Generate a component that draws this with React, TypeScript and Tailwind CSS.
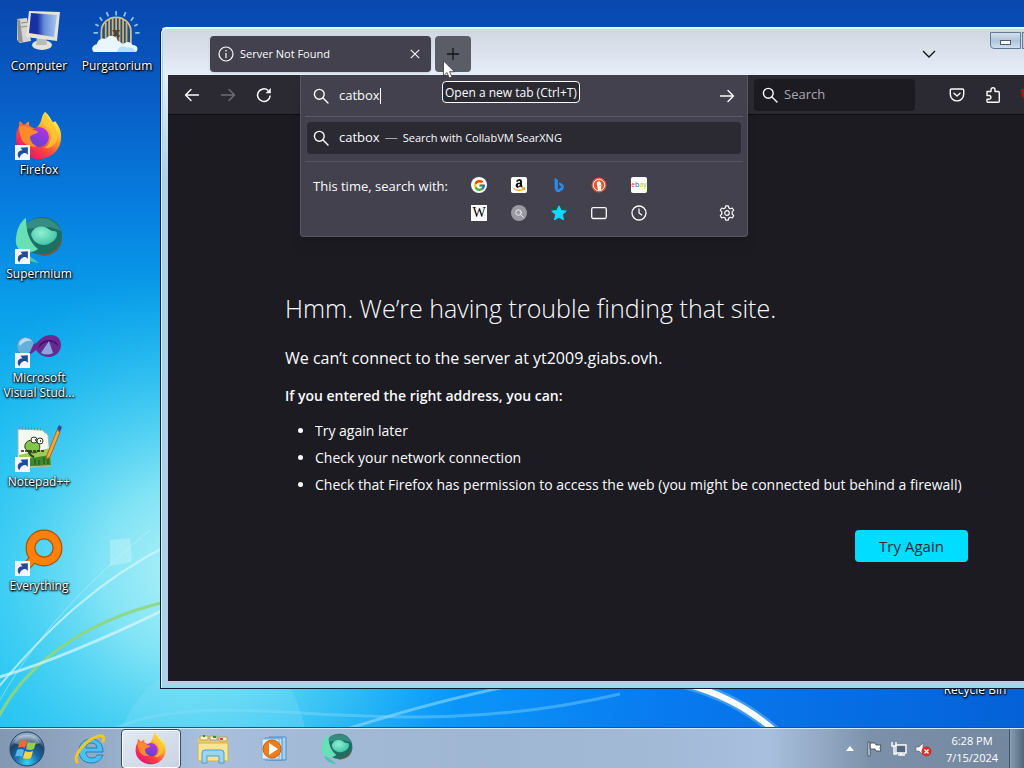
import React from 'react'
import { FcGoogle } from 'react-icons/fc'
import { BsBing } from 'react-icons/bs'

type IconProps = { className?: string }

function Wallpaper() {
  return (
    <svg className="absolute inset-0 w-full h-full" viewBox="0 0 1024 768" preserveAspectRatio="none" aria-hidden="true">
      <defs>
        <linearGradient id="sky" x1="0" y1="0" x2="0" y2="1">
          <stop offset="0" stopColor="#0847ae" />
          <stop offset="0.14" stopColor="#0860c8" />
          <stop offset="0.27" stopColor="#067fe0" />
          <stop offset="0.4" stopColor="#0a9fea" />
          <stop offset="0.54" stopColor="#12b6ef" />
          <stop offset="0.75" stopColor="#20c6f3" />
          <stop offset="1" stopColor="#1cc0f2" />
        </linearGradient>
        <radialGradient id="glow" gradientUnits="userSpaceOnUse" cx="190" cy="570" r="300">
          <stop offset="0" stopColor="#b4f2f8" />
          <stop offset="0.3" stopColor="#92e9f6" stopOpacity="0.85" />
          <stop offset="1" stopColor="#2cc4f2" stopOpacity="0" />
        </radialGradient>
        <linearGradient id="deep" x1="0" y1="0" x2="1" y2="0">
          <stop offset="0.2" stopColor="#18a8f6" stopOpacity="0" />
          <stop offset="0.42" stopColor="#0a96fa" stopOpacity="0.95" />
          <stop offset="0.65" stopColor="#087af0" />
          <stop offset="1" stopColor="#0561d8" />
        </linearGradient>
      </defs>
      <rect width="1024" height="768" fill="url(#sky)" />
      <rect y="600" width="1024" height="168" fill="url(#deep)" />
      <rect width="1024" height="768" fill="url(#glow)" />
      <path d="M122 728c20-50 60-70 110-70s65 35 73 70z" fill="#8ae4f8" opacity="0.25" />
      <g fill="none">
        <path d="M-4 722C22 668 80 622 165 602" stroke="#8fd67c" strokeWidth="3" opacity="0.9" />
        <path d="M-4 678Q60 660 168 608" stroke="#d8f8fc" strokeWidth="3" opacity="0.7" />
        <path d="M-4 690C50 625 100 580 168 545" stroke="#d8f8fc" strokeWidth="2" opacity="0.7" />
        <path d="M0 700C40 630 90 580 150 530" stroke="#c8f5fb" strokeWidth="1" opacity="0.5" />
        <path d="M116 728C230 680 380 750 620 694" stroke="#8adcfb" strokeWidth="3" opacity="0.4" />
        <path d="M350 728Q440 700 510 686" stroke="#8edcfb" strokeWidth="3" opacity="0.6" />
        <path d="M686 684Q738 698 776 732" stroke="#8fd2ff" strokeWidth="11" opacity="0.4" />
        <path d="M686 684Q738 698 776 732" stroke="#fff" strokeWidth="6" />
      </g>
      <path d="m110 540 20-2 2 24-22 4z" fill="#cdf8fc" opacity="0.4" />
    </svg>
  )
}

function FirefoxLogo({ className }: IconProps) {
  return (
    <svg viewBox="0 0 48 48" className={className} aria-hidden="true">
      <defs>
        <linearGradient id="foxBody" x1="0.85" y1="0.1" x2="0.2" y2="0.95">
          <stop offset="0.05" stopColor="#fff44f" />
          <stop offset="0.35" stopColor="#ff9f24" />
          <stop offset="0.62" stopColor="#ff4a40" />
          <stop offset="0.95" stopColor="#ef1568" />
        </linearGradient>
        <linearGradient id="foxCore" x1="0.7" y1="0" x2="0.3" y2="1">
          <stop offset="0" stopColor="#b833e1" />
          <stop offset="1" stopColor="#5b44d0" />
        </linearGradient>
      </defs>
      <path d="M30 0c4 3 5 6 7 9 1 2 2 1 3 0 4 5 7 11 6 18-1 12-11 20-22 20S2 39 1 28c-.5-6 1-10 3-14 0-2 0-4 1-5l4 4c3-2 4-4 5-3-.4 2 0 4 2 5l5 2c1-2 4-5 5-8 1-3 1-6 4-9z" fill="url(#foxBody)" />
      <circle cx="24" cy="25" r="10" fill="url(#foxCore)" />
      <path d="M4 14c6-1 11 1 14 4 3 0 4 1 5 2-3 3-7 2-8 5 0 4 3 8 7 9-6 2-12-1-15-6-2-4-3-9-3-14z" fill="#ff8a2c" />
      <path d="M29 13c5 2 8 7 7 13-1 5-3 8-7 10 6 1 11-3 13-8 2-7-1-12-5-17-3-4-5-7-7-11-2 4-3 9-1 13z" fill="#ffc634" opacity="0.8" />
    </svg>
  )
}

function SupermiumLogo({ className }: IconProps) {
  return (
    <svg viewBox="0 0 48 48" className={className} aria-hidden="true">
      <defs>
        <radialGradient id="superCore" cx="0.4" cy="0.35" r="0.7">
          <stop offset="0" stopColor="#8cf0d4" />
          <stop offset="1" stopColor="#3fc0a2" />
        </radialGradient>
      </defs>
      <ellipse cx="27" cy="20" rx="20" ry="19" fill="#1d6f66" />
      <path d="M8 13C15-2 39-2 46 15c-8-4-14-5-20-3z" fill="#348d80" />
      <path d="M26 38c12 0 20-8 21-18 1 12-8 20-20 20z" fill="#6a5b3c" />
      <path d="M1 22C2 12 6 5 11 2c0 13 3 24 12 31-5 4-12 4-17 2-4-3-6-8-5-13z" fill="#68dfb5" />
      <path d="M16 18c2-6 8-9 14-7 3 1 4 3 7 4 3 0 5 0 5 3 0 6-7 11-14 11-7-1-11-5-12-11z" fill="url(#superCore)" />
      <path d="M6 35c6 2 12 8 18 12-9-1-14-4-19-10z" fill="#45c8b4" />
    </svg>
  )
}

function ComputerIcon({ className }: IconProps) {
  return (
    <svg viewBox="0 0 48 48" className={className} aria-hidden="true">
      <defs>
        <linearGradient id="screen" x1="0" y1="0" x2="1" y2="0">
          <stop offset="0.3" stopColor="#1631a4" />
          <stop offset="0.55" stopColor="#688dd8" />
          <stop offset="1" stopColor="#a6c5ef" />
        </linearGradient>
      </defs>
      <path d="m2 11 10-1 4 23-11 2-3-3z" fill="#d9d5cb" />
      <path d="m2 11 3 1 3 23-5-2z" fill="#8d9297" />
      <path d="m6 15 8-1M6 19l8-1" stroke="#8a8a88" />
      <ellipse cx="27" cy="37" rx="10" ry="5" fill="#e3e3de" />
      <path d="m22 28 9 2 1 7H21z" fill="#b9bbb9" />
      <path d="m14 3 31 1-3 29-31-4z" fill="#e5e3da" />
      <path d="m16 5 26 2-3 22-25-4z" fill="url(#screen)" />
    </svg>
  )
}

function GatesIcon({ className }: IconProps) {
  return (
    <svg viewBox="0 0 60 48" className={className} aria-hidden="true">
      <g stroke="#8ac5f4" strokeWidth="2">
        <path d="M29 0v5M18 1l2 5M40 1l-2 5M10 7l3 4M49 7l-3 4M5 15l4 2M54 15l-4 2M3 25h5M56 25h-5" />
      </g>
      <path d="M12 38V23a17 16 0 0 1 34 0v15z" fill="#244f86" stroke="#d4c28a" strokeWidth="2" />
      <path d="M17 13v25M21 9v29M25 8v30M29 7v31M33 8v30M37 9v29M41 13v25" stroke="#d2b56a" strokeWidth="2" />
      <path d="M25 23a3 3 0 1 1 0 5M33 23a3 3 0 1 0 0 5" fill="none" stroke="#584324" strokeWidth="2" />
      <path d="M3 47c-4-4 0-9 4-9 0-5 6-8 10-6 4-6 12-4 14 2 4 2 5 3 6 5 3-5 9-4 11 0 6 0 7 5 4 8z" fill="#e8f6ff" />
      <path d="M30 47c1-6 7-8 11-5 6-1 9 1 11 5z" fill="#b8dcfa" />
    </svg>
  )
}

function VisualStudioIcon({ className }: IconProps) {
  return (
    <svg viewBox="0 0 48 48" className={className} aria-hidden="true">
      <path d="M2 26c0-8 9-12 15-6l3 4c5-4 8-9 16-9 6 0 10 4 10 10 0 7-6 12-12 12-6 0-10-3-13-7-5 4-8 6-12 6-4-1-7-5-7-10z" fill="#6a2894" />
      <path d="M2 26c0-8 9-12 15-6l2 3-4 9c-7 5-13 1-13-6z" fill="#63b0dd" />
      <path d="M4 24c1-6 8-8 13-3-5-1-9 1-12 5z" fill="#b6dff0" />
      <path d="M23 29c1-6 6-9 11-9s9 3 9 7c-2-4-6-6-10-5-4 0-7 3-10 7z" fill="#401366" />
      <path d="m26 33 8-12 4 12q-6 3-12 0z" fill="#8aa5dd" />
    </svg>
  )
}

function NotepadIcon({ className }: IconProps) {
  return (
    <svg viewBox="0 0 48 48" className={className} aria-hidden="true">
      <path d="m3 5 24 1 6 5 3 31-33 2z" fill="#f5f8ee" stroke="#a5b5aa" />
      <path d="m4 4 24 1" stroke="#7e8b8c" strokeWidth="3" strokeDasharray="1 2" />
      <path d="m4 31 31-7 1 18-32 1z" fill="#9dce52" />
      <path d="m4 36 31-5 1 10-32 2z" fill="#3f8a2d" />
      <path d="M20 41v-6M24 41v-5M29 40v-7M33 40v-5" stroke="#1f4f1c" />
      <path d="M10 24c-1-6 4-9 9-7 5 1 7 5 5 9-3 5-11 3-14-2z" fill="#83c54a" stroke="#263f1c" />
      <path d="M13 26c1 4 3 6 6 7" fill="none" stroke="#263f1c" strokeWidth="2" />
      <circle cx="19" cy="16" r="3" fill="#fff" stroke="#263c20" />
      <circle cx="25" cy="17" r="3" fill="#fff" stroke="#263c20" />
      <path d="M20 16h1M25 17h1M6 27h24" stroke="#222" strokeDasharray="3 1" strokeWidth="1.500" />
      <path d="m32 31 10-25 3 2-10 25-4 2z" fill="#f1aa3b" stroke="#a96a22" />
      <path d="m42 5 2-4 3 2-2 5z" fill="#374c91" />
    </svg>
  )
}

function EverythingIcon({ className }: IconProps) {
  return (
    <svg viewBox="0 0 48 48" className={className} aria-hidden="true">
      <path d="m7 43 12-13" stroke="#ac5207" strokeWidth="9" strokeLinecap="round" />
      <circle cx="29" cy="20" r="13.500" fill="none" stroke="#ac5207" strokeWidth="10" />
      <circle cx="29" cy="20" r="13.500" fill="none" stroke="#ff8109" strokeWidth="7.500" />
      <path d="m8 42 12-13" stroke="#ff8109" strokeWidth="7" />
    </svg>
  )
}

function ShortcutArrow() {
  return (
    <svg viewBox="0 0 14 14" className="absolute left-0 bottom-0 w-[15px] h-[15px]" aria-hidden="true">
      <rect width="14" height="14" fill="#f4f8fc" />
      <path d="M4 12.500C1 9 3 5 7 5L5 2.500l7-.5v7L10 7.500C7 7 5 9 4 12.500z" fill="#1d4d95" />
    </svg>
  )
}

type DesktopItem = { label: string; icon: (p: IconProps) => React.ReactElement; shortcut?: boolean; wide?: boolean }

const columns: DesktopItem[][] = [
  [
    { label: 'Computer', icon: ComputerIcon },
    { label: 'Firefox', icon: FirefoxLogo, shortcut: true },
    { label: 'Supermium', icon: SupermiumLogo, shortcut: true },
    { label: 'Microsoft Visual Stud...', icon: VisualStudioIcon, shortcut: true },
    { label: 'Notepad++', icon: NotepadIcon, shortcut: true },
    { label: 'Everything', icon: EverythingIcon, shortcut: true },
  ],
  [{ label: 'Purgatorium', icon: GatesIcon, wide: true }],
]

const labelStyle = 'text-xs leading-[15px] text-white text-center [text-shadow:1px_1px_2px_#000,0_1px_2px_#000,0_0_2px_#000]'

function DesktopIcons() {
  return (
    <div className="relative flex">
      {columns.map((items, i) => (
        <div key={i} className="flex flex-col">
          {items.map(({ label, icon: Icon, shortcut, wide }) => (
            <button key={label} className="w-[78px] h-[104px] pt-2 flex flex-col items-center gap-[2px]">
              <span className="relative">
                <Icon className={wide ? 'w-[52px] h-[48px]' : 'w-[48px] h-[48px]'} />
                {shortcut && <ShortcutArrow />}
              </span>
              <span className={labelStyle}>{label}</span>
            </button>
          ))}
        </div>
      ))}
    </div>
  )
}

function SearchGlyph({ className }: IconProps) {
  return (
    <svg viewBox="0 0 16 16" className={className} fill="none" stroke="currentColor" strokeWidth="1.4" strokeLinecap="round" aria-hidden="true">
      <circle cx="6.3" cy="6.3" r="4.9" />
      <path d="m10 10 5 5" />
    </svg>
  )
}

function ArrowGlyph({ className }: IconProps) {
  return (
    <svg viewBox="0 0 16 16" className={className} fill="none" stroke="currentColor" strokeWidth="1.4" strokeLinecap="round" strokeLinejoin="round" aria-hidden="true">
      <path d="M1.5 8h13M9 2.5 14.5 8 9 13.5" />
    </svg>
  )
}

function TabStrip() {
  return (
    <div className="h-[47px] flex items-start pl-[42px]">
      <div className="mt-2 w-[221px] h-9 rounded bg-[#42414d] text-[#fbfbfe] flex items-center pl-2 pr-2 shadow">
        <svg viewBox="0 0 16 16" className="w-4 h-4" fill="none" stroke="currentColor" strokeWidth="1.2" aria-hidden="true">
          <circle cx="8" cy="8" r="7" />
          <path d="M8 7v5M8 4v1.4" />
        </svg>
        <span className="ml-[6px] flex-1 text-[11px]">Server Not Found</span>
        <button aria-label="Close tab" className="w-4 h-4 flex items-center justify-center">
          <svg viewBox="0 0 10 10" className="w-[10px] h-[10px]" stroke="currentColor" strokeWidth="1.1"><path d="m.8.8 8.4 8.4M9.2.8.8 9.2" /></svg>
        </button>
      </div>
      <button aria-label="Open a new tab" className="mt-2 ml-1 w-9 h-9 rounded bg-[#5a5d66] text-[#15141a] flex items-center justify-center">
        <svg viewBox="0 0 16 16" className="w-4 h-4" stroke="currentColor" strokeWidth="1.3"><path d="M8 2v12M2 8h12" /></svg>
      </button>
      <button aria-label="List all tabs" className="mt-2 ml-auto w-9 h-9 text-[#15141a] flex items-center justify-center">
        <svg viewBox="0 0 14 8" className="w-[14px] h-2" fill="none" stroke="currentColor" strokeWidth="1.4"><path d="m1 1 6 6 6-6" /></svg>
      </button>
      <div className="ml-[43px] mt-[4px] h-[17px] flex gap-px text-[#4f5c6e]">
        <button aria-label="Minimize" className="w-[31px] border border-[#617a98] rounded-bl bg-linear-to-b from-[#d4dfea] via-[#afc4d8] to-[#cfdfef] flex items-end justify-center pb-[3px]">
          <span className="w-[11px] h-[5px] border border-[#4f5c6e] bg-white" />
        </button>
        <button aria-label="Maximize" className="w-[26px] border border-[#617a98] bg-[#bdcfdf]" />
        <button aria-label="Close" className="w-[47px] border border-[#617a98] bg-[#c9665a]" />
      </div>
    </div>
  )
}

const engineStyle = 'w-4 h-4'

function Engines() {
  const engines: [string, React.ReactElement][] = [
    ['Google', <span className="w-4 h-4 rounded-full bg-white flex items-center justify-center"><FcGoogle className="w-[13px] h-[13px]" /></span>],
    ['Amazon', <svg viewBox="0 0 16 16" className={engineStyle}>
      <rect width="16" height="16" rx="2" fill="#fff" />
      <path d="M5 4.500Q5.500 2 8.200 2q2.800 0 2.800 2.700V8q0 .8.700 1.400l-1.500 1.200q-.7-.5-.9-1.100-2 1.700-3.700.9Q4.200 9.500 4.700 7.700 5.300 5.600 9 5.600V4.700q0-1-.9-1t-1.100 1zM9 7Q6.800 7 6.800 8.300q.1.900.9.900 1.300-.2 1.300-2.200z" fill="#111" />
      <path d="M2.500 11.500q5.500 4 11 0M11 11h2.500v2" fill="none" stroke="#e8a520" strokeWidth="1.3" />
    </svg>],
    ['Bing', <BsBing className="w-[14px] h-[14px] text-[#2a8cf0]" />],
    ['DuckDuckGo', <svg viewBox="0 0 16 16" className={engineStyle}>
      <circle cx="8" cy="8" r="7.500" fill="#de5833" />
      <circle cx="8" cy="8" r="5.700" fill="none" stroke="#fff" strokeWidth="0.900" />
      <path d="M7 13 5.800 6.800C5 4.500 8 3.500 9.600 5.200l.8 3.500-.6 4.300z" fill="#fff" />
      <path d="m8.400 8 3 .4-2.800 1z" fill="#f7b733" />
    </svg>],
    ['eBay', <svg viewBox="0 0 16 16" className={engineStyle}>
      <rect width="16" height="16" rx="2" fill="#fff" />
      <text x="8" y="10" textAnchor="middle" fontSize="7" fill="#e53238">e<tspan fill="#0064d2">b</tspan><tspan fill="#f5af02">a</tspan><tspan fill="#86b817">y</tspan></text>
    </svg>],
    ['Wikipedia', <span className="w-4 h-4 bg-white text-black text-sm leading-4 text-center font-['Liberation_Serif',serif]">W</span>],
    ['CollabVM SearXNG', <span className="w-4 h-4 rounded-full bg-[#9a9aa0] text-white flex items-center justify-center"><SearchGlyph className="w-[9px] h-[9px]" /></span>],
    ['Bookmarks', <svg viewBox="0 0 16 16" className={engineStyle}><path d="m8 .8 2.2 4.7 5.1.6-3.8 3.5 1 5.2L8 12.3l-4.5 2.5 1-5.2L.7 6.1l5.1-.6z" fill="#00ddff" stroke="#00ddff" strokeLinejoin="round" /></svg>],
    ['Tabs', <svg viewBox="0 0 16 16" className={engineStyle}><rect x="0.7" y="2.7" width="14.6" height="10.8" rx="1.5" fill="none" stroke="currentColor" strokeWidth="1.3" /></svg>],
    ['History', <svg viewBox="0 0 16 16" className={engineStyle} fill="none" stroke="currentColor" strokeWidth="1.3"><circle cx="8" cy="8" r="7" /><path d="M8 3.5V8l3.2 2.2" /></svg>],
  ]

  return (
    <div className="flex px-3 pt-[9px] pb-[9px]">
      <p className="w-[146px] pt-[5px] text-[13px] leading-5">This time, search with:</p>
      <div className="grid grid-cols-5">
        {engines.map(([name, icon]) => (
          <button key={name} aria-label={name} className="w-10 h-7 flex items-center justify-center">{icon}</button>
        ))}
      </div>
      <button aria-label="Search settings" className="ml-auto mt-7 w-4 h-7 flex items-center justify-center">
        <svg viewBox="0 0 16 16" className="w-4 h-4" fill="none" stroke="currentColor" strokeWidth="1.2" strokeLinejoin="round">
          <path d="M6.7.8h2.6l.5 2.1 1.5.8 2-.7 1.4 2.2-1.5 1.6v2.2l1.5 1.7-1.4 2.3-2-.7-1.5.8-.5 2.1H6.7l-.5-2.1-1.5-.8-2 .7-1.4-2.3L2.8 9V6.8L1.3 5.2 2.7 3l2 .7 1.5-.8z" />
          <circle cx="8" cy="8" r="2.3" />
        </svg>
      </button>
    </div>
  )
}

function UrlBar() {
  return (
    <div className="relative w-[448px] shrink-0 self-stretch">
      <div className="absolute inset-x-0 top-0 z-10 rounded-b border border-[#575663] border-t-0 bg-[#42414d] text-[#fbfbfe] shadow-lg">
        <div className="h-[41px] flex items-center pl-3 pr-3">
          <SearchGlyph className="w-4 h-4" />
          <label htmlFor="url" className="sr-only">Address</label>
          <span className="ml-[10px] flex-1 flex items-center">
            <input id="url" className="field-sizing-content text-[13px] outline-none bg-transparent" defaultValue="catbox" />
            <span className="w-px h-4 bg-white" />
          </span>
          <button aria-label="Go"><ArrowGlyph className="w-4 h-4" /></button>
        </div>
        <div className="mx-1 border-t border-[#5b5a66] pt-[5px] pb-[7px] px-[2px]">
          <div className="h-8 rounded-sm bg-[#2b2a33] flex items-center pl-[6px] text-[13px]">
            <SearchGlyph className="w-4 h-4" />
            <span className="ml-[10px]">catbox</span>
            <span className="mx-[5px] text-[#a5a4ac]">—</span>
            <span className="text-[11px]">Search with CollabVM SearXNG</span>
          </div>
        </div>
        <div className="mx-1 border-t border-[#55545f]" />
        <Engines />
      </div>
    </div>
  )
}

function Toolbar() {
  return (
    <div className="h-10 bg-[#2b2a33] border-b border-[#0e0d12] flex items-center pl-[6px] text-[#fbfbfe]">
      <button aria-label="Back" className="w-9 flex justify-center"><ArrowGlyph className="w-4 h-4 rotate-180" /></button>
      <button aria-label="Forward" disabled className="w-9 flex justify-center text-[#6f6e78]"><ArrowGlyph className="w-4 h-4" /></button>
      <button aria-label="Reload" className="w-9 mr-[18px] flex justify-center">
        <svg viewBox="0 0 16 16" className="w-4 h-4" fill="none" stroke="currentColor" strokeWidth="1.5">
          <path d="M14.2 8.5A6.3 6.3 0 1 1 12.2 3.5" />
          <path d="M14.8 1v5.2H9.6z" fill="currentColor" stroke="none" />
        </svg>
      </button>
      <UrlBar />
      <label className="ml-[6px] w-[161px] h-8 rounded bg-[#1c1b22] flex items-center gap-[6px] pl-2">
        <SearchGlyph className="w-4 h-4" />
        <input aria-label="Search" placeholder="Search" className="w-28 text-[13px] outline-none bg-transparent placeholder:text-[#a9a8b0]" />
      </label>
      <button aria-label="Save to Pocket" className="ml-6 w-9 flex justify-center">
        <svg viewBox="0 0 16 16" className="w-4 h-4" fill="none" stroke="currentColor" strokeWidth="1.4" strokeLinecap="round" strokeLinejoin="round">
          <path d="M2.5 2h11q1.2 0 1.2 1.2v4a6.7 6.7 0 0 1-13.4 0v-4Q1.300 2 2.500 2z" />
          <path d="M5 6.300 8 9l3-2.700" />
        </svg>
      </button>
      <button aria-label="Extensions" className="w-9 flex justify-center">
        <svg viewBox="0 0 16 16" className="w-4 h-4" fill="none" stroke="currentColor" strokeWidth="1.4" strokeLinejoin="round">
          <path d="M2 4.500h4V2.700a2 2 0 0 1 4 0v1.800h3.300q1 0 1 1v8.800q0 1-1 1H3q-1 0-1-1v-2h2a1.900 1.900 0 0 0 0-3.800H2z" />
        </svg>
      </button>
      <button aria-label="uBlock Origin" className="w-9 flex justify-center">
        <svg viewBox="0 0 16 16" className="w-4 h-4"><path d="M8 0q4 2 8 2 0 10-8 14Q0 12 0 2q4 0 8-2z" fill="#a01818" /></svg>
      </button>
    </div>
  )
}

function ErrorPage() {
  return (
    <main className="flex-1 bg-[#1c1b22] text-[#fbfbfe] pt-[173px] pl-[117px]">
      <div className="w-[700px]">
        <h1 className="text-[25px] leading-10 font-light">Hmm. We’re having trouble finding that site.</h1>
        <p className="mt-[18px] text-base leading-6">We can’t connect to the server at yt2009.giabs.ovh.</p>
        <p className="mt-[14px] text-sm leading-6 font-semibold">If you entered the right address, you can:</p>
        <ul className="mt-[9px] pl-[30px] list-disc text-sm leading-[27px]">
          <li>Try again later</li>
          <li>Check your network connection</li>
          <li>Check that Firefox has permission to access the web (you might be connected but behind a firewall)</li>
        </ul>
      </div>
      <div className="w-[683px] mt-8 flex justify-end">
        <button className="w-[113px] h-8 rounded bg-[#00ddff] text-[#2b2a33] text-[15px]">Try Again</button>
      </div>
    </main>
  )
}

function BrowserWindow() {
  return (
    <div className="absolute left-[160px] top-[27px] -right-20 bottom-[39px] rounded-t-md border border-[#101c30] border-t-[#e8fbff] bg-linear-to-b from-[#cfd6e0] from-0% via-[#e6eef9] via-7% to-[#b4cfe8] to-22% px-[7px] pb-[7px] shadow-[inset_1px_1px_0_#d8f7ff,inset_2px_-2px_0_#8fdcf2]">
      <div className="h-full flex flex-col">
        <TabStrip />
        <Toolbar />
        <ErrorPage />
      </div>
    </div>
  )
}

// Floats over the tab strip and the address bar
function Pointer() {
  return (
    <>
      <div role="tooltip" className="absolute left-[442px] top-[81px] z-20 h-[22px] px-[2px] rounded border border-[#fbfbfe] bg-[#2b2a33] text-[#fbfbfe] text-xs leading-[22px] whitespace-nowrap">
        Open a new tab (Ctrl+T)
      </div>
      <svg viewBox="0 0 12 19" className="absolute left-[443px] top-[60px] z-20 w-3 h-[19px]" aria-hidden="true">
        <path d="M.5.8v15l3.500-3.300L6.300 18l2.600-1.100-2.300-5.200h4.800z" fill="#fff" stroke="#222" strokeWidth="0.7" />
      </svg>
    </>
  )
}

function StartOrb() {
  return (
    <svg viewBox="0 0 36 36" className="w-9 h-9" aria-hidden="true">
      <defs>
        <radialGradient id="orb" cx="0.5" cy="0.9" r="0.8">
          <stop offset="0" stopColor="#37d4f4" />
          <stop offset="0.45" stopColor="#176aa8" />
          <stop offset="0.8" stopColor="#1d4268" />
          <stop offset="1" stopColor="#8fabc2" />
        </radialGradient>
      </defs>
      <circle cx="18" cy="18" r="17" fill="url(#orb)" stroke="#263f5c" />
      <path d="M5 12a14 13 0 0 1 26 0q-13 6-26 0z" fill="#fff" opacity="0.3" />
      <path d="M11 10q4-2 7 0l-2 7q-3-2-7 0z" fill="#ef6a2d" />
      <path d="M19 11q4 2 8 0l-2 7q-4 2-8 0z" fill="#98cf42" />
      <path d="M8 19q4-2 7 0l-2 7q-3-2-7 0z" fill="#58b8ec" />
      <path d="M16 20q4 2 8 0l-2 7q-4 2-8 0z" fill="#ffd445" />
    </svg>
  )
}

function ExplorerE() {
  return (
    <svg viewBox="0 0 32 32" className="w-8 h-8" aria-hidden="true">
      <path d="M29 19H12c0 4 2 6 6 6 3 0 4-1 5-3h6c-2 5-6 8-12 8C10 30 5 25 5 18S10 6 17 6s12 5 12 13zM12 15h11c0-3-2-5-5-5-4 0-6 2-6 5z" fill="#4cc0f0" stroke="#1f80bd" fillRule="evenodd" />
      <path d="M3 29C-1 22 12 6 25 3c4-1 6 1 4 5" fill="none" stroke="#f3c620" strokeWidth="3" strokeLinecap="round" />
    </svg>
  )
}

function FolderIcon() {
  return (
    <svg viewBox="0 0 34 32" className="w-[34px] h-8" aria-hidden="true">
      <path d="M2 5h10l2 3h18v20H2z" fill="#e9cd68" />
      <path d="M4 3h8v4H4zM14 3h7v4h-7zM23 4h8v4h-8z" fill="#f8f2c8" stroke="#bda34c" />
      <path d="M7 3h2M17 4h3" stroke="#2f8d4a" strokeWidth="2" />
      <path d="M24 6h3" stroke="#d2462c" strokeWidth="2" />
      <path d="M2 10h30v18H2z" fill="#f7e591" stroke="#d2b254" />
      <path d="M6 20q0-3 3-3h16q3 0 3 3v10h-5v-7H11v7H6z" fill="#9ad5f4" stroke="#4f9cca" />
    </svg>
  )
}

function MediaIcon() {
  return (
    <svg viewBox="0 0 28 28" className="w-7 h-7" aria-hidden="true">
      <path d="M9 2h17v23H9z" fill="#a8d1ef" stroke="#4a90c8" />
      <path d="M5 3h17v22H5z" fill="#c3e1f4" stroke="#4a90c8" />
      <path d="M2 4h17v20H2z" fill="#e4f1f8" stroke="#7dafd2" />
      <circle cx="12" cy="14" r="9" fill="#ef7d1c" stroke="#c45d0c" />
      <path d="m9 8 9 6-9 6z" fill="#fff" />
    </svg>
  )
}

function Tray() {
  return (
    <div className="ml-auto flex items-center text-white">
      <button aria-label="Show hidden icons" className="w-5 flex justify-center">
        <svg viewBox="0 0 8 5" className="w-2 h-[5px]"><path d="m0 5 4-5 4 5z" fill="#fff" /></svg>
      </button>
      <button aria-label="Action Center" className="w-6 ml-[3px] flex justify-center">
        <svg viewBox="0 0 16 16" className="w-4 h-4" stroke="#2f3f51" strokeWidth="0.8"><path d="M1 1h2v14H1zM3 2h5l1 2h5l-1 3 1 3H9L8 8H3z" fill="#fff" /></svg>
      </button>
      <button aria-label="Network" className="w-6 flex justify-center">
        <svg viewBox="0 0 16 16" className="w-4 h-4"><path d="M5 4h10v8H5zM7 14h7M10 12v2" fill="#506980" stroke="#fff" strokeWidth="1.4" /><path d="M1 1v4h4V1M3 5v8h3" fill="none" stroke="#fff" strokeWidth="1.4" /></svg>
      </button>
      <button aria-label="Volume" className="w-6 flex justify-center">
        <svg viewBox="0 0 17 16" className="w-[17px] h-4"><path d="M1 6h3l4-4v12l-4-4H1z" fill="#fff" stroke="#4f6175" strokeWidth="0.6" /><circle cx="11.500" cy="10.500" r="5" fill="#d92b27" /><path d="m9.500 8.500 4 4M13.500 8.500l-4 4" stroke="#fff" strokeWidth="1.5" /></svg>
      </button>
      <div className="w-[74px] text-[11px] leading-[17px] text-center">
        <p>6:28 PM</p>
        <p>7/15/2024</p>
      </div>
      <button aria-label="Show desktop" className="w-[15px] h-10 border-l border-[#41566c] bg-linear-to-r from-[#8a9eb2] to-[#52677c]" />
    </div>
  )
}

function Taskbar() {
  return (
    <footer className="relative h-10 shrink-0 flex items-center border-t border-[#d5e9fa] bg-linear-to-r from-[#8298b2] from-0% via-[#a8bfdd] via-20% to-[#72879e] shadow-[0_-1px_0_#26517c]">
      <div className="absolute inset-0 bg-linear-to-r from-[#a8bfdd]/0 from-10% via-[#a8bfdd] via-75% to-[#a8bfdd]/0 to-85%" />
      <div className="relative flex-1 flex items-center">
        <button aria-label="Start" className="w-[54px] flex justify-center"><StartOrb /></button>
        <button aria-label="Internet Explorer" className="w-[67px] pl-[5px] flex justify-center"><ExplorerE /></button>
        <button aria-label="Firefox" className="w-[60px] h-10 rounded-sm border border-[#344a65] bg-linear-to-br from-[#e3eaf4] to-[#c8d3e3] flex items-center justify-center shadow-[inset_0_0_0_1px_#fff]">
          <FirefoxLogo className="w-8 h-8" />
        </button>
        <button aria-label="Windows Explorer" className="w-16 flex justify-center"><FolderIcon /></button>
        <button aria-label="Media Player" className="w-[58px] flex justify-center"><MediaIcon /></button>
        <button aria-label="Supermium" className="w-[68px] flex justify-center"><SupermiumLogo className="w-8 h-8" /></button>
        <Tray />
      </div>
    </footer>
  )
}

export default function App() {
  return (
    <div className="relative h-screen flex flex-col overflow-hidden font-['Open_Sans','Noto_Sans',sans-serif]">
      <Wallpaper />
      <div className="relative flex-1">
        <DesktopIcons />
        <span className={`absolute right-[10px] top-[682px] w-[78px] ${labelStyle}`}>Recycle Bin</span>
        <BrowserWindow />
        <Pointer />
      </div>
      <Taskbar />
    </div>
  )
}
